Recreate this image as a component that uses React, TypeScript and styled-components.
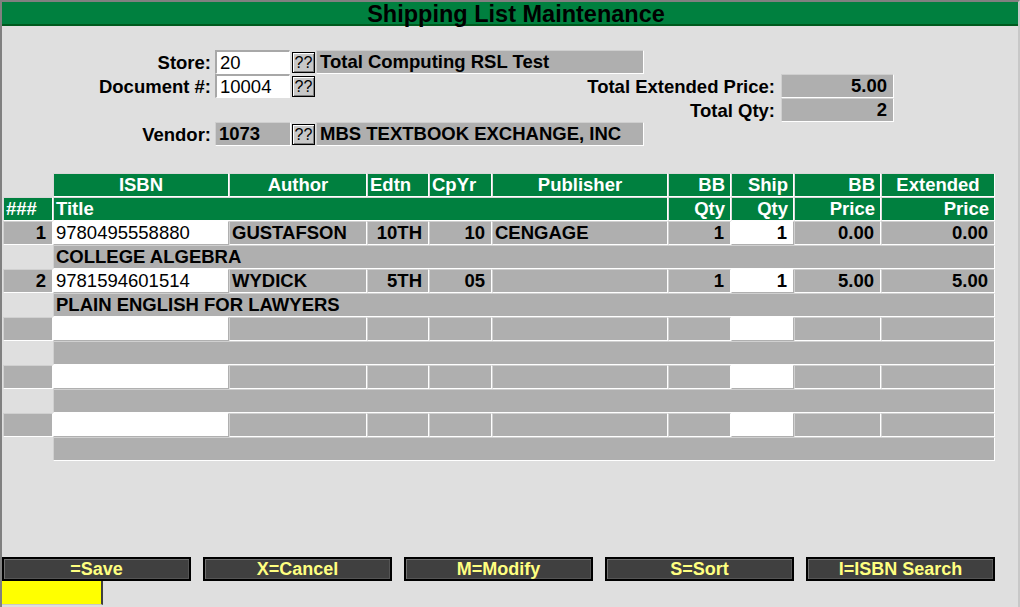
import React from "react";
import styled, { createGlobalStyle, css } from "styled-components";

const GREEN = "#00803f";
const GRAY = "#afafaf";
const BG = "#dfdfdf";

const GlobalStyle = createGlobalStyle`
  html, body { margin: 0; padding: 0; background: ${BG}; }
  body { font-family: "Liberation Sans", Arial, sans-serif; }
  * { box-sizing: border-box; }
`;

const Window = styled.div`
  width: 1020px;
  height: 607px;
  background: ${BG};
  border-left: 2px solid #808080;
  border-top: 2px solid #808080;
  border-right: 2px solid #c8c8c8;
  display: flex;
  flex-direction: column;
  overflow: hidden;
`;

const TitleBar = styled.div`
  height: 24px;
  background: ${GREEN};
  border-bottom: 2px solid #005a1e;
  display: flex;
  align-items: center;
  justify-content: center;
  font-size: 23.5px;
  font-weight: bold;
  color: #000;
  line-height: 22px;
  padding: 1px 0 0 12px;
`;

const Form = styled.div`
  margin-top: 24px;
  display: grid;
  grid-template-columns: 213px 76px 25px 328px 137px 113px;
  grid-auto-rows: 24px;
  font-size: 18.5px;
  font-weight: bold;
`;

const Label = styled.div<{ $col: string; $row: number; $pad?: number }>`
  grid-column: ${(p) => p.$col};
  grid-row: ${(p) => p.$row};
  text-align: right;
  padding-right: ${(p) => p.$pad ?? 4}px;
  padding-top: 1px;
  line-height: 24px;
  white-space: nowrap;
`;

const Field = styled.div<{ $col: string; $row: number; $white?: boolean; $right?: boolean }>`
  grid-column: ${(p) => p.$col};
  grid-row: ${(p) => p.$row};
  height: 24px;
  line-height: 22px;
  padding: 0 2px 0 3px;
  white-space: nowrap;
  overflow: hidden;
  text-align: ${(p) => (p.$right ? "right" : "left")};
  ${(p) =>
    p.$white
      ? css`
          background: #fff;
          font-weight: normal;
          border-top: 2px solid #a8a8a8;
          border-left: 2px solid #a8a8a8;
          border-right: 1px solid #fff;
          border-bottom: 1px solid #fff;
          width: 75px;
        `
      : css`
          background: ${GRAY};
          border: 1px solid #fff;
          border-top-color: #cfcfcf;
          border-left-color: #cfcfcf;
        `}
  ${(p) =>
    p.$right &&
    css`
      padding-right: 6px;
    `}
`;

const Lookup = styled.div<{ $row: number }>`
  grid-column: 3;
  grid-row: ${(p) => p.$row};
  align-self: center;
  margin-left: 1px;
  width: 23px;
  height: 21px;
  background: #c8c8c8;
  border: 1px solid #000;
  box-shadow: inset 1px 1px 0 #fff, inset -1px -1px 0 #808080;
  font-size: 16px;
  font-weight: normal;
  line-height: 19px;
  text-align: center;
`;

const Table = styled.div`
  margin: 27px 0 0 1px;
  display: grid;
  grid-template-columns: 50px 176px 138px 62px 63px 176px 63px 63px 87px 114px;
  grid-auto-rows: 24px;
  width: 992px;
  font-size: 18.5px;
  font-weight: bold;
`;

type Align = "left" | "right" | "center";

const HeadCell = styled.div<{ $align?: Align; $span?: string }>`
  ${(p) => p.$span && `grid-column: ${p.$span};`}
  background: ${GREEN};
  color: #fff;
  border: 1px solid #fff;
  border-top-color: #d8d8d8;
  border-left-color: #d8d8d8;
  text-align: ${(p) => p.$align ?? "left"};
  padding: 0 ${(p) => (p.$align === "right" ? 5 : 2)}px 0 2px;
  line-height: 22px;
  white-space: nowrap;
  overflow: hidden;
`;

const Blank = styled.div<{ $span?: string }>`
  ${(p) => p.$span && `grid-column: ${p.$span};`}
`;

const Cell = styled.div<{ $align?: Align; $span?: string; $white?: boolean }>`
  ${(p) => p.$span && `grid-column: ${p.$span};`}
  background: ${(p) => (p.$white ? "#fff" : GRAY)};
  color: #000;
  font-weight: ${(p) => (p.$white && p.$align !== "right" ? "normal" : "bold")};
  border: 1px solid #fff;
  ${(p) =>
    p.$white
      ? css`
          border-color: #fff #b0b0b0 #b0b0b0 #fff;
        `
      : css`
          border-top-color: #d0d0d0;
          border-left-color: #d0d0d0;
        `}
  text-align: ${(p) => p.$align ?? "left"};
  padding: 0 ${(p) => (p.$align === "right" ? 6 : 2)}px 0 2px;
  line-height: 22px;
  white-space: nowrap;
  overflow: hidden;
`;

const Footer = styled.div`
  margin-top: auto;
  display: flex;
  flex-direction: column;
  align-items: flex-start;
  padding-bottom: 2px;
`;

const ButtonRow = styled.div`
  display: flex;
  gap: 12px;
`;

const ActionButton = styled.button`
  width: 189px;
  height: 24px;
  margin: 0;
  padding: 0;
  background: #404040;
  border: 2px solid #000;
  box-shadow: inset 1px 1px 0 #707070, inset -1px -1px 0 #555;
  color: #ffff80;
  font-family: "Liberation Sans", Arial, sans-serif;
  font-size: 18px;
  font-weight: bold;
  line-height: 20px;
  text-align: center;
  cursor: default;
`;

const StatusBox = styled.div`
  width: 101px;
  height: 24px;
  background: #ffff00;
  border-right: 2px solid #404040;
  border-bottom: 1px solid #c8c8c8;
`;

type Row = {
  n: string;
  isbn: string;
  author: string;
  edtn: string;
  cpyr: string;
  pub: string;
  bbqty: string;
  ship: string;
  bbprice: string;
  ext: string;
  title: string;
};

const empty: Row = { n: "", isbn: "", author: "", edtn: "", cpyr: "", pub: "", bbqty: "", ship: "", bbprice: "", ext: "", title: "" };

const rows: Row[] = [
  { n: "1", isbn: "9780495558880", author: "GUSTAFSON", edtn: "10TH", cpyr: "10", pub: "CENGAGE", bbqty: "1", ship: "1", bbprice: "0.00", ext: "0.00", title: "COLLEGE ALGEBRA" },
  { n: "2", isbn: "9781594601514", author: "WYDICK", edtn: "5TH", cpyr: "05", pub: "", bbqty: "1", ship: "1", bbprice: "5.00", ext: "5.00", title: "PLAIN ENGLISH FOR LAWYERS" },
  empty,
  empty,
  empty,
];

const buttons = ["=Save", "X=Cancel", "M=Modify", "S=Sort", "I=ISBN Search"];

export default function App() {
  return (
    <>
      <GlobalStyle />
      <Window>
        <TitleBar>Shipping List Maintenance</TitleBar>
        <Form>
          <Label $col="1" $row={1}>Store:</Label>
          <Field $col="2" $row={1} $white>20</Field>
          <Lookup $row={1}>??</Lookup>
          <Field $col="4" $row={1}>Total Computing RSL Test</Field>

          <Label $col="1" $row={2}>Document #:</Label>
          <Field $col="2" $row={2} $white>10004</Field>
          <Lookup $row={2}>??</Lookup>
          <Label $col="4 / 6" $row={2} $pad={6}>Total Extended Price:</Label>
          <Field $col="6" $row={2} $right>5.00</Field>

          <Label $col="4 / 6" $row={3} $pad={6}>Total Qty:</Label>
          <Field $col="6" $row={3} $right>2</Field>

          <Label $col="1" $row={4}>Vendor:</Label>
          <Field $col="2" $row={4}>1073</Field>
          <Lookup $row={4}>??</Lookup>
          <Field $col="4" $row={4}>MBS TEXTBOOK EXCHANGE, INC</Field>
        </Form>

        <Table>
          <Blank />
          <HeadCell $align="center">ISBN</HeadCell>
          <HeadCell $align="center">Author</HeadCell>
          <HeadCell>Edtn</HeadCell>
          <HeadCell>CpYr</HeadCell>
          <HeadCell $align="center">Publisher</HeadCell>
          <HeadCell $align="right">BB</HeadCell>
          <HeadCell $align="right">Ship</HeadCell>
          <HeadCell $align="right">BB</HeadCell>
          <HeadCell $align="center">Extended</HeadCell>

          <HeadCell>###</HeadCell>
          <HeadCell $span="2 / 7">Title</HeadCell>
          <HeadCell $align="right">Qty</HeadCell>
          <HeadCell $align="right">Qty</HeadCell>
          <HeadCell $align="right">Price</HeadCell>
          <HeadCell $align="right">Price</HeadCell>

          {rows.map((r, i) => (
            <React.Fragment key={i}>
              <Cell $align="right">{r.n}</Cell>
              <Cell $white>{r.isbn}</Cell>
              <Cell>{r.author}</Cell>
              <Cell $align="right">{r.edtn}</Cell>
              <Cell $align="right">{r.cpyr}</Cell>
              <Cell>{r.pub}</Cell>
              <Cell $align="right">{r.bbqty}</Cell>
              <Cell $white $align="right">{r.ship}</Cell>
              <Cell $align="right">{r.bbprice}</Cell>
              <Cell $align="right">{r.ext}</Cell>
              <Blank />
              <Cell $span="2 / -1">{r.title}</Cell>
            </React.Fragment>
          ))}
        </Table>

        <Footer>
          <ButtonRow>
            {buttons.map((b) => (
              <ActionButton key={b}>{b}</ActionButton>
            ))}
          </ButtonRow>
          <StatusBox />
        </Footer>
      </Window>
    </>
  );
}
